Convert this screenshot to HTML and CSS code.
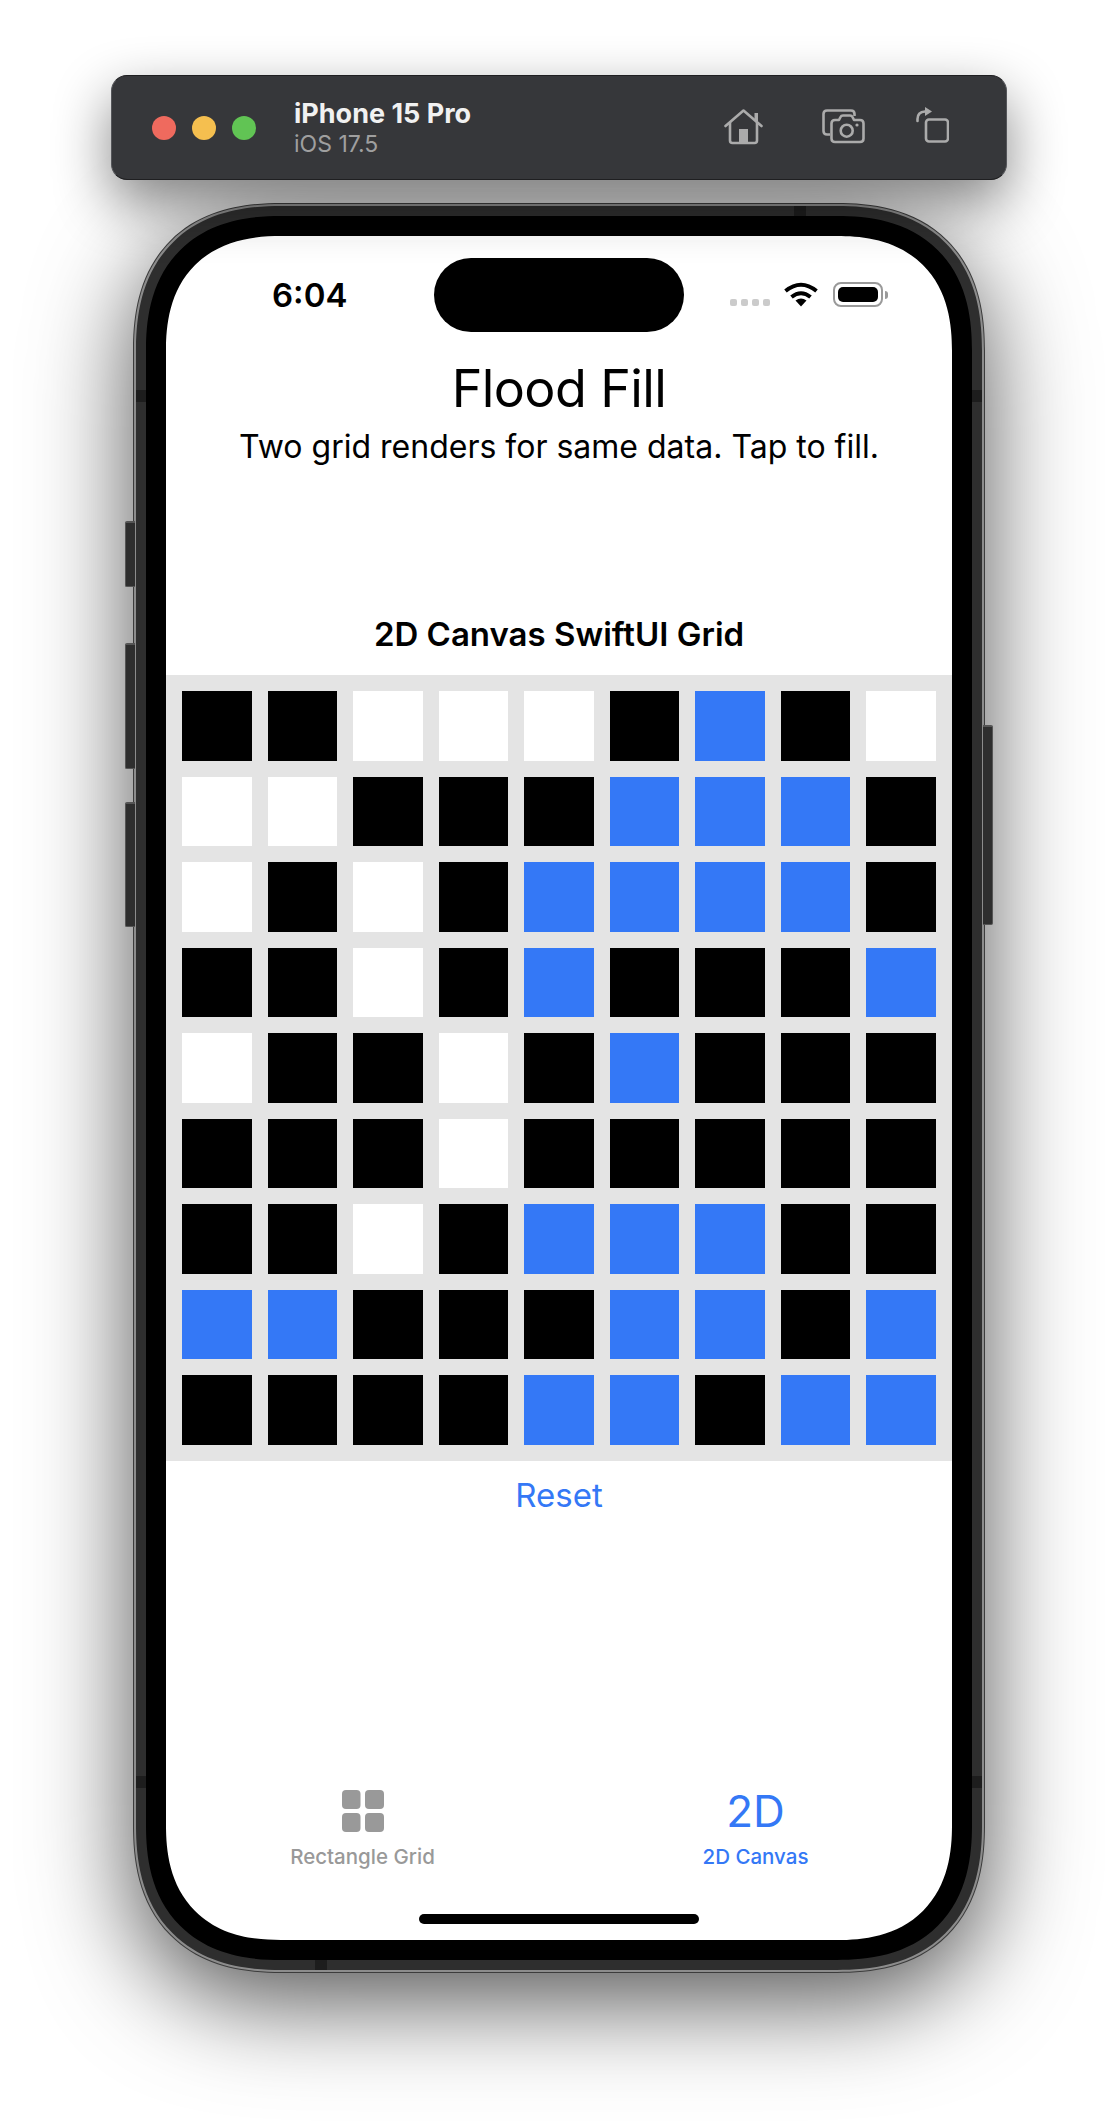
FILE: index.html
```html
<!DOCTYPE html>
<html lang="en">
<head>
  <meta charset="UTF-8" />
  <title>Flood Fill - iPhone 15 Pro</title>
  <link rel="stylesheet" href="styles.css">
</head>
<body>
  <div class="toolbar">
    <div class="lights">
      <span class="light red"></span>
      <span class="light yellow"></span>
      <span class="light green"></span>
    </div>
    <div class="device">
      <div class="device-name">iPhone 15 Pro</div>
      <div class="device-os">iOS 17.5</div>
    </div>
    <div class="tools">
      <svg class="tool-home" width="39" height="36" viewBox="0 0 39 36" fill="none" stroke="#ababab" stroke-width="2.6" stroke-linecap="round" stroke-linejoin="round">
        <path d="M1.5 17 19.5 1.5 37.5 17"/>
        <path d="M6 13.5V31.5Q6 34 8.5 34H30.5Q33 34 33 31.5V13.5"/>
        <rect x="30.5" y="4" width="3.5" height="8" fill="#ababab" stroke="none"/>
        <rect x="15" y="20" width="9" height="14" fill="#ababab" stroke="none"/>
      </svg>
      <svg class="tool-shot" width="43" height="35" viewBox="0 0 43 35" fill="none" stroke="#ababab" stroke-width="2.6" stroke-linejoin="round">
        <path d="M8 25.5H5Q1.5 25.5 1.5 22V5Q1.5 1.5 5 1.5H29Q32.5 1.5 32.5 5V7"/>
        <path d="M13 11H17L18.5 8Q19.2 6.5 21 6.5H28Q29.8 6.5 30.5 8L32 11H38Q41.5 11 41.5 14.5V29.5Q41.5 33 38 33H13Q9.5 33 9.5 29.5V14.5Q9.5 11 13 11Z"/>
        <circle cx="24.7" cy="21.7" r="6"/>
        <circle cx="35" cy="16" r="1.6" fill="#ababab" stroke="none"/>
      </svg>
      <svg class="tool-rotate" width="33" height="36" viewBox="0 0 33 36" fill="none" stroke="#ababab" stroke-width="2.6" stroke-linecap="round">
        <rect x="10" y="12.5" width="22" height="22" rx="3"/>
        <path d="M1.5 14V12Q1.5 5 9 4.5"/>
        <polygon points="9,0 16,4.5 9,9" fill="#ababab" stroke="none"/>
      </svg>
    </div>
  </div>

  <div class="phone">
    <span class="side-btn mute"></span>
    <span class="side-btn vol-up"></span>
    <span class="side-btn vol-down"></span>
    <span class="side-btn power"></span>
    <div class="rim">
      <div class="bezel">
        <span class="band band-top"></span>
        <span class="band band-bottom"></span>
        <span class="band band-left-a"></span>
        <span class="band band-left-b"></span>
        <span class="band band-right-a"></span>
        <span class="band band-right-b"></span>
        <div class="glass">
          <div class="screen">
            <div class="statusbar">
              <div class="time">6:04</div>
              <div class="island"></div>
              <div class="signal"><i></i><i></i><i></i><i></i></div>
              <svg class="wifi" width="34" height="25" viewBox="0 0 34 25" fill="none" stroke="#000" stroke-width="4">
                <path d="M1.5 9Q17-3.5 32.5 9"/>
                <path d="M7.5 15Q17 7.5 26.5 15"/>
                <path d="M17 24.5 11.5 18.5Q17 14.5 22.5 18.5Z" fill="#000" stroke="none"/>
              </svg>
              <div class="battery"><div class="battery-fill"></div></div>
              <div class="battery-cap"></div>
            </div>

            <h1 class="title">Flood Fill</h1>
            <p class="subtitle">Two grid renders for same data. Tap to fill.</p>
            <h2 class="grid-title">2D Canvas SwiftUI Grid</h2>

            <div class="grid">
              <div class="k"></div><div class="k"></div><div class="w"></div><div class="w"></div><div class="w"></div><div class="k"></div><div class="b"></div><div class="k"></div><div class="w"></div>
              <div class="w"></div><div class="w"></div><div class="k"></div><div class="k"></div><div class="k"></div><div class="b"></div><div class="b"></div><div class="b"></div><div class="k"></div>
              <div class="w"></div><div class="k"></div><div class="w"></div><div class="k"></div><div class="b"></div><div class="b"></div><div class="b"></div><div class="b"></div><div class="k"></div>
              <div class="k"></div><div class="k"></div><div class="w"></div><div class="k"></div><div class="b"></div><div class="k"></div><div class="k"></div><div class="k"></div><div class="b"></div>
              <div class="w"></div><div class="k"></div><div class="k"></div><div class="w"></div><div class="k"></div><div class="b"></div><div class="k"></div><div class="k"></div><div class="k"></div>
              <div class="k"></div><div class="k"></div><div class="k"></div><div class="w"></div><div class="k"></div><div class="k"></div><div class="k"></div><div class="k"></div><div class="k"></div>
              <div class="k"></div><div class="k"></div><div class="w"></div><div class="k"></div><div class="b"></div><div class="b"></div><div class="b"></div><div class="k"></div><div class="k"></div>
              <div class="b"></div><div class="b"></div><div class="k"></div><div class="k"></div><div class="k"></div><div class="b"></div><div class="b"></div><div class="k"></div><div class="b"></div>
              <div class="k"></div><div class="k"></div><div class="k"></div><div class="k"></div><div class="b"></div><div class="b"></div><div class="k"></div><div class="b"></div><div class="b"></div>
            </div>

            <div class="reset">Reset</div>

            <div class="tabbar">
              <div class="tab">
                <svg class="tab-icon" width="42" height="42" viewBox="0 0 42 42" fill="#999">
                  <rect x="0" y="0" width="18.5" height="19" rx="4"/>
                  <rect x="23" y="0" width="19" height="19" rx="4"/>
                  <rect x="0" y="23" width="18.5" height="19" rx="4"/>
                  <rect x="23" y="23" width="19" height="19" rx="4"/>
                </svg>
                <div class="tab-label">Rectangle Grid</div>
              </div>
              <div class="tab active">
                <div class="tab-2d">2D</div>
                <div class="tab-label">2D Canvas</div>
              </div>
            </div>
            <div class="home-bar"></div>
          </div>
        </div>
      </div>
    </div>
  </div>
</body>
</html>
```

FILE: styles.css
```css
* {
  box-sizing: border-box;
}
html, body {
  margin: 0;
  padding: 0;
}
body {
  width: 1118px;
  height: 2124px;
  overflow: hidden;
  background: #fff;
  font-family: Inter, "Liberation Sans", sans-serif;
  color: #000;
  padding-top: 75px;
}

/* simulator title bar */
.toolbar {
  width: 896px;
  height: 105px;
  margin: 0 auto 23px;
  display: flex;
  align-items: center;
  background: #36373a;
  border-radius: 16px;
  border: 1px solid #55565a;
  border-top-color: #1f1f21;
  border-bottom-color: #1f1f21;
  padding: 0 57px 0 40px;
  box-shadow: 0 22px 55px rgba(0,0,0,0.48);
  position: relative;
  z-index: 2;
}
.lights {
  display: flex;
  gap: 16px;
  margin-top: 1px;
}
.light {
  width: 24px;
  height: 24px;
  border-radius: 50%;
}
.red { background: #ef6a5e; }
.yellow { background: #f5bf4f; }
.green { background: #61c454; }
.device {
  margin-left: 38px;
  margin-top: 3px;
}
.device-name {
  font-size: 27px;
  line-height: 30px;
  font-weight: 700;
  color: #f1f1f1;
}
.device-os {
  font-size: 23px;
  line-height: 30px;
  color: #9f9f9f;
}
.tools {
  margin-left: auto;
  margin-top: -2px;
  display: flex;
  align-items: center;
}
.tool-shot { margin-left: 59px; }
.tool-rotate { margin-left: 51px; margin-top: -4px; }

/* phone body */
.phone {
  position: relative;
  width: 852px;
  height: 1770px;
  margin: 0 auto;
  padding: 1px;
  background: #3c3c3c;
  border-radius: 148px;
  corner-shape: superellipse(1.25);
  box-shadow: 0 28px 100px rgba(0,0,0,0.68);
}
.rim {
  width: 100%;
  height: 100%;
  padding: 2px;
  background: #8c8c8c;
  border-radius: 147px;
  corner-shape: superellipse(1.25);
}
.bezel {
  position: relative;
  width: 100%;
  height: 100%;
  padding: 10px;
  background: #2e2e2e;
  border-radius: 145px;
  corner-shape: superellipse(1.25);
}
.glass {
  position: relative;
  width: 100%;
  height: 100%;
  padding: 20px;
  background: #000;
  border-radius: 135px;
  corner-shape: superellipse(1.25);
}
.screen {
  width: 786px;
  height: 1704px;
  display: flex;
  flex-direction: column;
  align-items: center;
  background: #fff;
  border-radius: 115px;
  corner-shape: superellipse(1.25);
  overflow: hidden;
}
.side-btn {
  position: absolute;
  width: 10px;
  background: #2e2e2e;
  border: 1px solid #555;
  border-top: 2px solid #555;
}
.mute, .vol-up, .vol-down {
  left: -8px;
  border-radius: 2px 0 0 2px;
  border-right: 0;
}
.mute { top: 318px; height: 66px; }
.vol-up { top: 440px; height: 126px; }
.vol-down { top: 599px; height: 125px; }
.power {
  right: -8px;
  top: 522px;
  height: 200px;
  border-radius: 0 2px 2px 0;
  border-left: 0;
}
.band {
  position: absolute;
  background: #1d1d1d;
}
.band-top { top: 0; left: 658px; width: 12px; height: 10px; }
.band-bottom { bottom: 0; left: 179px; width: 12px; height: 10px; }
.band-left-a, .band-left-b { left: 0; width: 10px; height: 12px; }
.band-right-a, .band-right-b { right: 0; width: 10px; height: 12px; }
.band-left-a, .band-right-a { top: 184px; }
.band-left-b, .band-right-b { bottom: 182px; }

/* status bar */
.statusbar {
  width: 100%;
  height: 74px;
  margin-top: 22px;
  padding-left: 106px;
  display: flex;
  align-items: center;
  flex-shrink: 0;
}
.time {
  width: 161.5px;
  font-size: 33px;
  font-weight: 600;
}
.island {
  width: 250px;
  height: 74px;
  background: #000;
  border-radius: 37px;
  margin-right: 46px;
}
.signal {
  display: flex;
  gap: 4px;
  margin-top: 14px;
}
.signal i {
  width: 7px;
  height: 7px;
  border-radius: 2px;
  background: #cbcbcb;
}
.wifi {
  margin-left: 14px;
  margin-top: -2px;
}
.battery {
  width: 50px;
  height: 25px;
  margin-left: 15px;
  margin-top: -1px;
  padding: 3px;
  border: 2px solid #9a9a9a;
  border-radius: 8px;
}
.battery-fill {
  width: 100%;
  height: 100%;
  background: #000;
  border-radius: 5px;
}
.battery-cap {
  width: 3px;
  height: 8px;
  margin-left: 2px;
  background: #9a9a9a;
  border-radius: 0 3px 3px 0;
}

/* page content */
.title {
  margin: 26px 0 0;
  font-size: 52px;
  line-height: 62px;
  font-weight: 400;
  letter-spacing: -0.6px;
}
.subtitle {
  margin: 8px 0 0;
  font-size: 32px;
  line-height: 38px;
}
.grid-title {
  margin: 148px 0 0;
  font-size: 33px;
  line-height: 40px;
  font-weight: 600;
}
.grid {
  width: 786px;
  height: 786px;
  margin-top: 21px;
  flex-shrink: 0;
  display: grid;
  grid-template-columns: repeat(9, 1fr);
  grid-template-rows: repeat(9, 1fr);
  gap: 16px;
  padding: 16px;
  background: #e4e4e4;
}
.k { background: #000; }
.w { background: #fff; }
.b { background: #3478f6; }
.reset {
  margin-top: 14px;
  font-size: 33px;
  line-height: 40px;
  color: #3478f6;
}

/* tab bar */
.tabbar {
  width: 100%;
  margin-top: auto;
  display: grid;
  grid-template-columns: 1fr 1fr;
}
.tab {
  display: flex;
  flex-direction: column;
  align-items: center;
  color: #999;
}
.tab.active {
  color: #3478f6;
}
.tab-icon {
  display: block;
}
.tab-2d {
  height: 42px;
  font-size: 44px;
  line-height: 42px;
}
.tab-label {
  margin-top: 13px;
  font-size: 20.5px;
  line-height: 24px;
  font-weight: 500;
}
.home-bar {
  width: 280px;
  height: 10px;
  margin: 45px 0 16px;
  background: #000;
  border-radius: 5px;
  flex-shrink: 0;
}
```
